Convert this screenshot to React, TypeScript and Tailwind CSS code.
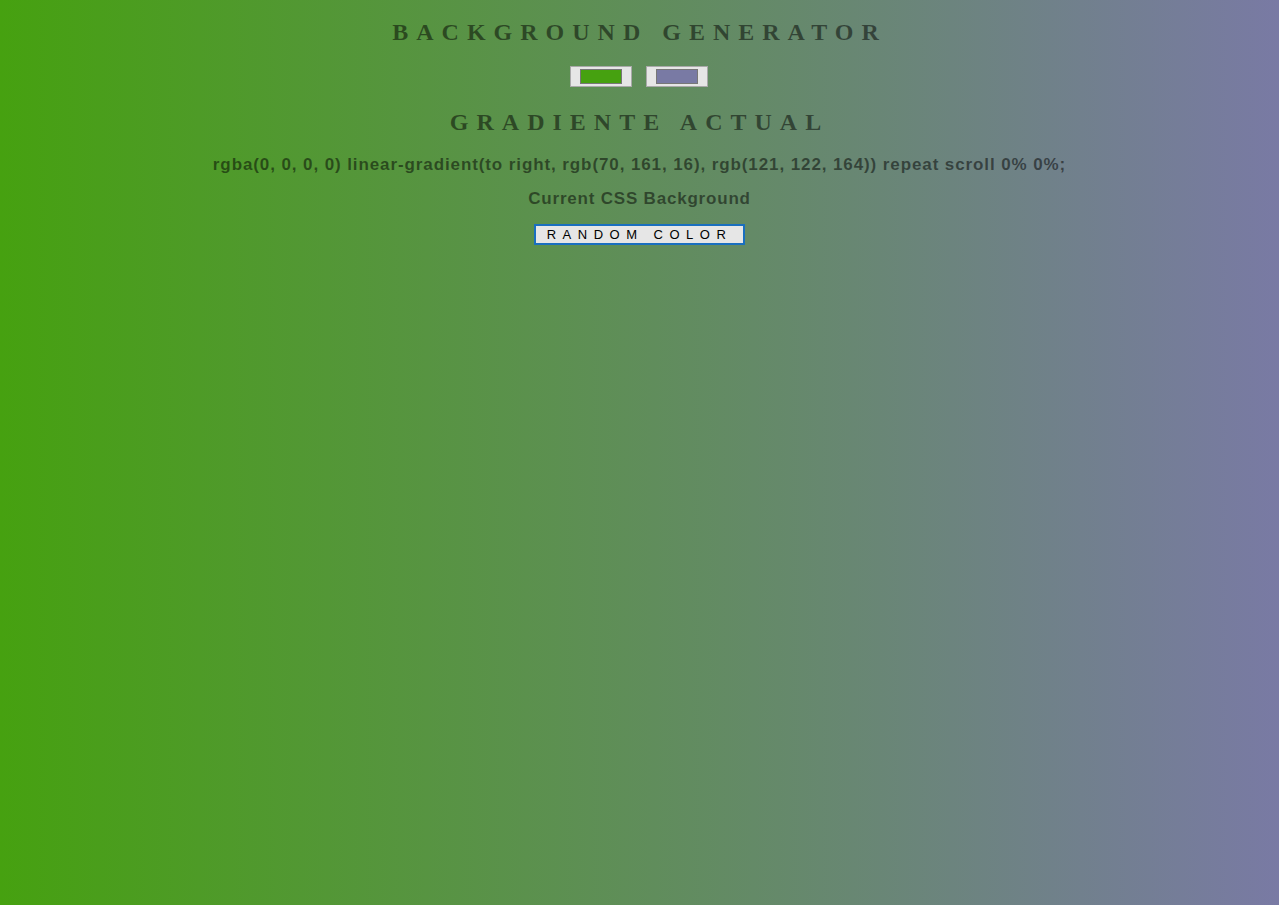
export default function App() {
  return (
    <div
      className="min-h-[905px] w-full text-center text-black/50"
      style={{ background: "linear-gradient(to right, rgb(70, 161, 16), rgb(121, 122, 164))" }}
    >
      <h1 className="pt-[18px] font-['Liberation_Serif',serif] text-[24px] font-bold leading-[28px] tracking-[8px]">
        BACKGROUND GENERATOR
      </h1>
      <div className="mt-[20px] flex justify-center gap-[14px] pr-[1px]">
        <div className="flex h-[21px] w-[62px] items-center justify-center border border-[#a9a9a9] bg-[#e6e6e6]">
          <div className="h-[15px] w-[42px] border border-[#777] bg-[rgb(70,161,16)]" />
        </div>
        <div className="flex h-[21px] w-[62px] items-center justify-center border border-[#a9a9a9] bg-[#e6e6e6]">
          <div className="h-[15px] w-[42px] border border-[#777] bg-[rgb(121,122,164)]" />
        </div>
      </div>
      <h2 className="mt-[21px] font-['Liberation_Serif',serif] text-[24px] font-bold leading-[28px] tracking-[8px]">
        GRADIENTE ACTUAL
      </h2>
      <p className="mt-[19px] font-['Liberation_Sans',Arial,sans-serif] text-[17px] font-bold leading-[20px] tracking-[0.9px]">
        rgba(0, 0, 0, 0) linear-gradient(to right, rgb(70, 161, 16), rgb(121, 122, 164)) repeat scroll 0% 0%;
      </p>
      <p className="mt-[14px] font-['Liberation_Sans',Arial,sans-serif] text-[17px] font-bold leading-[20px] tracking-[0.8px]">
        Current CSS Background
      </p>
      <div className="mt-[15px] flex justify-center">
        <button className="h-[21px] w-[211px] border-2 border-[#1a6fbf] bg-[#e6e6e6] font-['Liberation_Sans',Arial,sans-serif] text-[13px] leading-[17px] tracking-[6.5px] text-black">
          RANDOM COLOR
        </button>
      </div>
    </div>
  );
}
